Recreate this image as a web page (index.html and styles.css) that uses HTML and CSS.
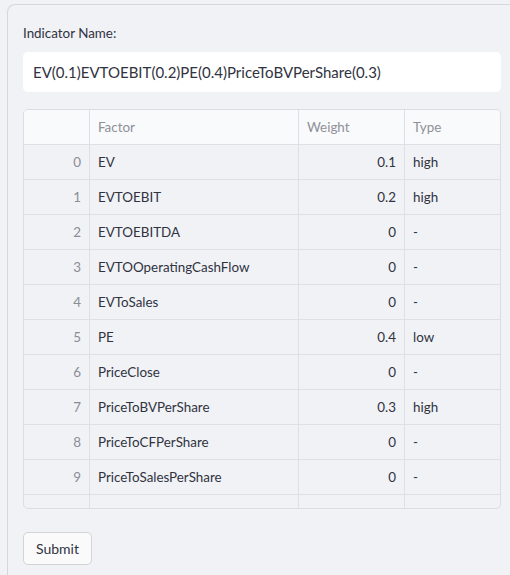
FILE: index.html
```html
<!DOCTYPE html>
<html>
<head>
<meta charset="utf-8">
<link rel="stylesheet" href="styles.css">
</head>
<body>
<div class="form">
  <label class="label">Indicator Name:</label>
  <div class="input">EV(0.1)EVTOEBIT(0.2)PE(0.4)PriceToBVPerShare(0.3)</div>
  <div class="grid">
    <div class="row head">
      <div class="c idx"></div>
      <div class="c f">Factor</div>
      <div class="c w">Weight</div>
      <div class="c t">Type</div>
    </div>
    <div class="row"><div class="c idx">0</div><div class="c f">EV</div><div class="c w num">0.1</div><div class="c t">high</div></div>
    <div class="row"><div class="c idx">1</div><div class="c f">EVTOEBIT</div><div class="c w num">0.2</div><div class="c t">high</div></div>
    <div class="row"><div class="c idx">2</div><div class="c f">EVTOEBITDA</div><div class="c w num">0</div><div class="c t">-</div></div>
    <div class="row"><div class="c idx">3</div><div class="c f">EVTOOperatingCashFlow</div><div class="c w num">0</div><div class="c t">-</div></div>
    <div class="row"><div class="c idx">4</div><div class="c f">EVToSales</div><div class="c w num">0</div><div class="c t">-</div></div>
    <div class="row"><div class="c idx">5</div><div class="c f">PE</div><div class="c w num">0.4</div><div class="c t">low</div></div>
    <div class="row"><div class="c idx">6</div><div class="c f">PriceClose</div><div class="c w num">0</div><div class="c t">-</div></div>
    <div class="row"><div class="c idx">7</div><div class="c f">PriceToBVPerShare</div><div class="c w num">0.3</div><div class="c t">high</div></div>
    <div class="row"><div class="c idx">8</div><div class="c f">PriceToCFPerShare</div><div class="c w num">0</div><div class="c t">-</div></div>
    <div class="row"><div class="c idx">9</div><div class="c f">PriceToSalesPerShare</div><div class="c w num">0</div><div class="c t">-</div></div>
    <div class="row"><div class="c idx"></div><div class="c f"></div><div class="c w"></div><div class="c t"></div></div>
  </div>
  <button class="btn">Submit</button>
</div>
</body>
</html>
```
FILE: styles.css
```css
html, body {
  margin: 0;
  padding: 0;
  background: #f0f2f6;
  font-family: "Source Sans Pro", Lato, "Noto Sans", sans-serif;
  color: #31333f;
  overflow: hidden;
}
.form {
  margin: 4px 0 0 7px;
  width: 503px;
  height: 571px;
  border: 1px solid #d6d7dc;
  border-right: none;
  border-bottom: none;
  border-radius: 8px 0 0 0;
  padding: 19px 0 0 15px;
  box-sizing: border-box;
}
.label {
  display: block;
  font-size: 13.4px;
  line-height: 18px;
  height: 28px;
}
.input {
  width: 478px;
  height: 40px;
  box-sizing: border-box;
  background: #fff;
  border-radius: 5px;
  padding: 0 10px;
  font-size: 15px;
  line-height: 40px;
}
.grid {
  margin-top: 17px;
  width: 478px;
  height: 400px;
  box-sizing: border-box;
  border: 1px solid #dcdde2;
  border-radius: 5px;
  overflow: hidden;
}
.row {
  display: flex;
  height: 35px;
  border-bottom: 1px solid #dfe0e5;
  box-sizing: border-box;
  font-size: 13.4px;
}
.row.head {
  background: #f9fafb;
  color: #8f9098;
}
.c {
  box-sizing: border-box;
  line-height: 34px;
  padding: 0 8px;
  white-space: nowrap;
  overflow: hidden;
  border-right: 1px solid #dfe0e5;
}
.idx { width: 66px; text-align: right; color: #8b8d95; }
.f { width: 209px; }
.w { width: 106px; }
.t { width: 95px; border-right: none; }
.num { text-align: right; }
.btn {
  margin-top: 23px;
  font-family: inherit;
  font-size: 14px;
  color: #31333f;
  background: #fafafa;
  border: 1px solid #d3d4d8;
  border-radius: 5px;
  width: 69px;
  height: 33px;
  padding: 0;
}
```
